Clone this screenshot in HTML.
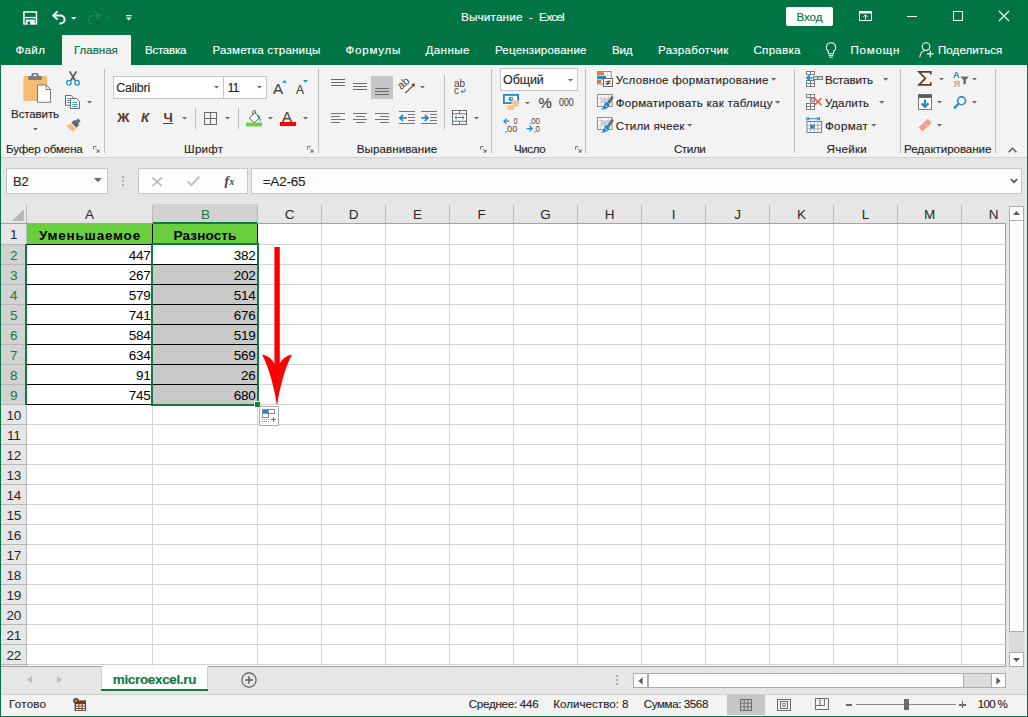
<!DOCTYPE html>
<html><head><meta charset="utf-8">
<style>
*{box-sizing:border-box;margin:0;padding:0}
html,body{width:1028px;height:717px;overflow:hidden;background:#e6e6e6;font-family:"Liberation Sans",sans-serif;font-size:12px;color:#262626}
.a{position:absolute}
.t{position:absolute;white-space:pre;line-height:1;-webkit-text-stroke:0.13px}
#title{left:0;top:0;width:1028px;height:65px;background:#007444}
#ribbon{left:1px;top:65px;width:1026px;height:93px;background:#f3f3f3;border-bottom:1px solid #d2d2d2}
#fbar{left:1px;top:158px;width:1026px;height:46px;background:#e6e6e6}
#grid{left:1px;top:204px;width:1005px;height:462px;background:#fff}
#bl{left:0;top:0;width:1px;height:717px;background:#007444}
#br{left:1027px;top:0;width:1px;height:717px;background:#007444}
#bb{left:0;top:716px;width:1028px;height:1px;background:#007444}
.w{color:#fff}
svg{position:absolute;overflow:visible}
</style></head><body>
<div class="a" id="title"></div>
<div class="a" id="ribbon"></div>
<div class="a" id="fbar"></div>
<div class="a" id="grid"></div>
<svg style="left:23px;top:10px" width="15" height="15" viewBox="0 0 15 15" ><rect x="0.95" y="1.95" width="12.5" height="11.9" fill="none" stroke="#fff" stroke-width="1.5"/><rect x="1" y="6.9" width="12.4" height="1.3" fill="#fff"/><rect x="2.8" y="9.6" width="9" height="4.6" fill="#fff"/><rect x="4.6" y="11.5" width="2.6" height="3.2" fill="#007444"/></svg>
<svg style="left:52px;top:10px" width="15" height="15" viewBox="0 0 15 15" ><path d="M1.4 5.5h7.2a4 4 0 0 1 0 8h-1.2" fill="none" stroke="#fff" stroke-width="1.9"/><path d="M5.6 1.4L1.2 5.5l4.4 4.1" fill="none" stroke="#fff" stroke-width="1.9"/></svg>
<svg style="left:71px;top:16.5px" width="6" height="3" viewBox="0 0 6 3" ><path d="M0 0h5.4l-2.7 2.8z" fill="#fff"/></svg>
<svg style="left:86px;top:10px" width="15" height="15" viewBox="0 0 15 15" ><path d="M13.8 5.8h-7.6a4 4 0 0 0 0 8h2.2" fill="none" stroke="#3f9470" stroke-width="1.3" stroke-dasharray="1.2 1.2"/><path d="M9.4 1.6l4.2 4.2-4.2 4.2" fill="none" stroke="#3f9470" stroke-width="1.3" stroke-dasharray="1.2 1.2"/></svg>
<svg style="left:106px;top:17px" width="4" height="2" viewBox="0 0 4 2" ><path d="M0 0h3l-1.5 1.6z" fill="#3f9470"/></svg>
<svg style="left:126px;top:15px" width="6" height="6" viewBox="0 0 6 6" ><rect x="0" y="0" width="5.6" height="1.2" fill="#fff"/><path d="M0 2.6h5.6l-2.8 2.9z" fill="#fff"/></svg>
<div class="t" style="left:460.9px;top:11.7357px;font-size:11.8px;color:#fff;letter-spacing:0.13px;">Вычитание</div>
<div class="t" style="left:528.7px;top:11.7357px;font-size:11.8px;color:#fff;letter-spacing:0.21px;">-</div>
<div class="t" style="left:539.1px;top:11.7357px;font-size:11.8px;color:#fff;letter-spacing:-0.83px;">Excel</div>
<div class="a" style="left:786px;top:7px;width:47px;height:19px;background:#fff;border-radius:2px;"></div>
<div class="t" style="left:796.5px;top:11.1334px;font-size:11.6px;color:#007444;letter-spacing:-0.10px;">Вход</div>
<svg style="left:859px;top:11px" width="13" height="10" viewBox="0 0 13 10" ><rect x="0.5" y="0.5" width="12" height="9" fill="none" stroke="#fff"/><rect x="0.5" y="0.5" width="12" height="2" fill="#fff"/><path d="M6.5 3.8v4.6M4.3 6l2.2-2.2L8.7 6" fill="none" stroke="#fff"/></svg>
<div class="a" style="left:907px;top:16px;width:10px;height:1px;background:#fff;"></div>
<div class="a" style="left:953px;top:11px;width:10px;height:10px;background:transparent;border:1px solid #fff;"></div>
<svg style="left:999px;top:11px" width="10" height="10" viewBox="0 0 10 10" ><path d="M0 0l10 10M10 0L0 10" stroke="#fff" stroke-width="1.1"/></svg>
<div class="a" style="left:62px;top:35px;width:69px;height:30px;background:#f3f3f3;"></div>
<div class="t" style="left:15.5px;top:43.9334px;font-size:11.6px;color:#fff;letter-spacing:0.30px;">Файл</div>
<div class="t" style="left:74px;top:43.9334px;font-size:11.6px;color:#006a3c;letter-spacing:-0.04px;">Главная</div>
<div class="t" style="left:145px;top:43.9334px;font-size:11.6px;color:#fff;letter-spacing:-0.28px;">Вставка</div>
<div class="t" style="left:212.5px;top:43.9334px;font-size:11.6px;color:#fff;letter-spacing:0.17px;">Разметка страницы</div>
<div class="t" style="left:345.5px;top:43.9334px;font-size:11.6px;color:#fff;letter-spacing:0.75px;">Формулы</div>
<div class="t" style="left:425.5px;top:43.9334px;font-size:11.6px;color:#fff;letter-spacing:0.41px;">Данные</div>
<div class="t" style="left:495px;top:43.9334px;font-size:11.6px;color:#fff;letter-spacing:0.15px;">Рецензирование</div>
<div class="t" style="left:612px;top:43.9334px;font-size:11.6px;color:#fff;letter-spacing:-0.28px;">Вид</div>
<div class="t" style="left:658px;top:43.9334px;font-size:11.6px;color:#fff;letter-spacing:0.28px;">Разработчик</div>
<div class="t" style="left:753.5px;top:43.9334px;font-size:11.6px;color:#fff;letter-spacing:0.24px;">Справка</div>
<div class="t" style="left:850.5px;top:43.9334px;font-size:11.6px;color:#fff;letter-spacing:0.75px;">Помощн</div>
<div class="t" style="left:938px;top:43.9334px;font-size:11.6px;color:#fff;letter-spacing:0.04px;">Поделиться</div>
<svg style="left:825px;top:42px" width="12" height="16" viewBox="0 0 12 16" ><path d="M6 0.8a4.6 4.6 0 0 1 2.6 8.4v2.6h-5.2v-2.6a4.6 4.6 0 0 1 2.6-8.4z" fill="none" stroke="#fff" stroke-width="1.1"/><path d="M3.6 13.4h4.8M4.2 15.2h3.6" stroke="#fff" stroke-width="1"/></svg>
<svg style="left:919px;top:42px" width="15" height="16" viewBox="0 0 15 16" ><circle cx="7" cy="4.6" r="3.8" fill="none" stroke="#fff" stroke-width="1.1"/><path d="M0.8 15.2c0.4-3.6 2.6-5.8 4.4-6.4" fill="none" stroke="#fff" stroke-width="1.1"/><path d="M11.3 8.6v6.6M8 11.9h6.6" stroke="#fff" stroke-width="1.2"/></svg>
<div class="a" style="left:104px;top:69px;width:1px;height:84px;background:#bdbdbd;"></div>
<div class="a" style="left:318px;top:69px;width:1px;height:84px;background:#bdbdbd;"></div>
<div class="a" style="left:491px;top:69px;width:1px;height:84px;background:#bdbdbd;"></div>
<div class="a" style="left:585px;top:69px;width:1px;height:84px;background:#bdbdbd;"></div>
<div class="a" style="left:794px;top:69px;width:1px;height:84px;background:#bdbdbd;"></div>
<div class="a" style="left:900px;top:69px;width:1px;height:84px;background:#bdbdbd;"></div>
<div class="a" style="left:995px;top:69px;width:1px;height:84px;background:#bdbdbd;"></div>
<svg style="left:23px;top:73px" width="28" height="30" viewBox="0 0 28 30" ><rect x="0.3" y="3" width="24" height="25" rx="1.5" fill="#f5bd73"/><path d="M5.2 7v-4h3.2v-1.4q0-1.6 1.6-1.6h4q1.6 0 1.6 1.6v1.400h3.200v4z" fill="#7b7b7b"/><rect x="10.400" y="1.500" width="3.200" height="1.700" fill="#f3f3f3"/><path d="M14.5 12h8.6l4.4 4.4v12.9h-13z" fill="#fff" stroke="#7b7b7b" stroke-width="1"/><path d="M23 12v4.5h4.5" fill="none" stroke="#7b7b7b" stroke-width="1"/></svg>
<div class="t" style="left:11.1px;top:108.133px;font-size:11.6px;color:#262626;letter-spacing:-0.16px;">Вставить</div>
<svg style="left:33px;top:128.1px" width="5" height="2.6" viewBox="0 0 5 2.6" ><path d="M0 0h5 l-2.5 2.6 z" fill="#6a6a6a"/></svg>
<svg style="left:66px;top:71px" width="14" height="15" viewBox="0 0 14 15" ><path d="M3.6 0.4l5.6 9.2M10.4 0.4L4.8 9.6" stroke="#5a5a5a" stroke-width="1.8" fill="none"/><circle cx="2.9" cy="11.7" r="2.3" fill="none" stroke="#1e8bcd" stroke-width="1.2"/><circle cx="11.1" cy="11.7" r="2.3" fill="none" stroke="#1e8bcd" stroke-width="1.2"/></svg>
<svg style="left:65px;top:94.5px" width="15" height="14" viewBox="0 0 15 14" ><path d="M0.5 0.5h5.6l2.2 2.2v7.6h-7.8z" fill="#fff" stroke="#6a6a6a"/><path d="M2.2 3.4h3M2.2 5.4h3M2.2 7.4h3" stroke="#1e8bcd" stroke-width="0.9"/><path d="M5.5 3.5h6l3 3v7h-9z" fill="#fff" stroke="#6a6a6a"/><path d="M7.4 7.4h4.6M7.4 9.4h5.4M7.4 11.4h5.4" stroke="#1e8bcd" stroke-width="0.9"/></svg>
<svg style="left:87px;top:101.1px" width="5" height="2.6" viewBox="0 0 5 2.6" ><path d="M0 0h5 l-2.5 2.6 z" fill="#6a6a6a"/></svg>
<svg style="left:66px;top:117.5px" width="15" height="14" viewBox="0 0 15 14" ><path d="M9.6 2.8l2.6-2.4 2.4 2.5-2.5 2.5z" fill="#6a6a6a"/><path d="M5.2 4.4l3.6-2.6 4.4 4.6-2.8 3.6z" fill="#6a6a6a"/><path d="M4.4 5.4l5.6 5.6-3.4 2.6-6.4-5.4z" fill="#f5bd73"/></svg>
<div class="t" style="left:6px;top:142.933px;font-size:11.6px;color:#262626;letter-spacing:-0.18px;">Буфер обмена</div>
<svg style="left:93px;top:146px" width="7" height="7" viewBox="0 0 7 7" ><path d="M0.5 3.5v-3h3" fill="none" stroke="#777" stroke-width="1"/><path d="M2.6 2.6l3.4 3.4" stroke="#777" stroke-width="1"/><path d="M6.5 3v3.5h-3.5z" fill="#777"/></svg>
<div class="a" style="left:113px;top:76px;width:111px;height:23px;background:#fff;border:1px solid #c6c6c6;"></div>
<div class="a" style="left:224px;top:76px;width:43px;height:23px;background:#fff;border:1px solid #c6c6c6;border-left:none;"></div>
<div class="t" style="left:116.3px;top:82.3937px;font-size:12.5px;color:#262626;letter-spacing:-0.26px;">Calibri</div>
<svg style="left:214px;top:86.1px" width="5" height="2.6" viewBox="0 0 5 2.6" ><path d="M0 0h5 l-2.5 2.6 z" fill="#6a6a6a"/></svg>
<div class="t" style="left:227.5px;top:82.3937px;font-size:12.5px;color:#262626;letter-spacing:-1.00px;">11</div>
<svg style="left:256.6px;top:86.1px" width="5" height="2.6" viewBox="0 0 5 2.6" ><path d="M0 0h5 l-2.5 2.6 z" fill="#6a6a6a"/></svg>
<div class="t" style="left:272.9px;top:81.2725px;font-size:15px;color:#444;letter-spacing:1.18px;">A</div>
<svg style="left:281.6px;top:79.6px" width="5" height="3" viewBox="0 0 5 3" ><path d="M0 2.8h5L2.5 0z" fill="#1e8bcd"/></svg>
<div class="t" style="left:295.9px;top:83.738px;font-size:12px;color:#444;letter-spacing:0.94px;">A</div>
<svg style="left:303px;top:79.6px" width="5" height="3" viewBox="0 0 5 3" ><path d="M0 0h5L2.5 2.8z" fill="#1e8bcd"/></svg>
<div class="t" style="left:117.3px;top:110.905px;font-size:13.5px;color:#5c3d2e;letter-spacing:1.48px;font-weight:bold;">Ж</div>
<div class="t" style="left:141.1px;top:111.003px;font-size:13.3px;color:#5c3d2e;letter-spacing:1.18px;font-weight:bold;font-style:italic;">К</div>
<div class="t" style="left:163.5px;top:111.003px;font-size:13.3px;color:#5c3d2e;letter-spacing:1.12px;font-weight:bold;">Ч</div>
<div class="a" style="left:162.6px;top:123px;width:10.6px;height:1px;background:#5c3d2e;"></div>
<svg style="left:182px;top:116.9px" width="5" height="2.6" viewBox="0 0 5 2.6" ><path d="M0 0h5 l-2.5 2.6 z" fill="#6a6a6a"/></svg>
<div class="a" style="left:195px;top:108px;width:1px;height:21px;background:#bdbdbd;"></div>
<svg style="left:204px;top:111.5px" width="13" height="13" viewBox="0 0 13 13" ><rect x="0.5" y="0.5" width="12" height="12" fill="none" stroke="#6a6a6a"/><path d="M6.5 0.5v12M0.5 6.5h12" stroke="#6a6a6a"/></svg>
<svg style="left:225px;top:116.9px" width="5" height="2.6" viewBox="0 0 5 2.6" ><path d="M0 0h5 l-2.5 2.6 z" fill="#6a6a6a"/></svg>
<div class="a" style="left:238px;top:108px;width:1px;height:21px;background:#bdbdbd;"></div>
<svg style="left:246px;top:109.5px" width="16" height="17" viewBox="0 0 16 17" ><path d="M3.4 8.2l5.4-5.6 5 4.8-5.6 5.4z" fill="#fff" stroke="#5a5a5a" stroke-width="1"/><path d="M6.8 5v-3.2a1.4 1.4 0 0 1 2.8 0v2" fill="none" stroke="#5a5a5a" stroke-width="1"/><path d="M13 7.2c1.4 1 2.2 2.4 1.6 4.2-0.9-0.9-1.7-2.2-1.6-4.2z" fill="#1e8bcd"/><path d="M11.5 6l2 1.4" stroke="#1e8bcd" stroke-width="1.6"/><rect x="0" y="12.6" width="16" height="3.8" fill="#6acf3f"/></svg>
<svg style="left:268px;top:116.9px" width="5" height="2.6" viewBox="0 0 5 2.6" ><path d="M0 0h5 l-2.5 2.6 z" fill="#6a6a6a"/></svg>
<div class="t" style="left:281.9px;top:108.772px;font-size:15px;color:#5c3d2e;letter-spacing:1.50px;">A</div>
<div class="a" style="left:280px;top:122.2px;width:16px;height:3.8px;background:#f00;"></div>
<svg style="left:302.5px;top:116.9px" width="5" height="2.6" viewBox="0 0 5 2.6" ><path d="M0 0h5 l-2.5 2.6 z" fill="#6a6a6a"/></svg>
<div class="t" style="left:184.1px;top:142.933px;font-size:11.6px;color:#262626;letter-spacing:0.19px;">Шрифт</div>
<svg style="left:307px;top:146px" width="7" height="7" viewBox="0 0 7 7" ><path d="M0.5 3.5v-3h3" fill="none" stroke="#777" stroke-width="1"/><path d="M2.6 2.6l3.4 3.4" stroke="#777" stroke-width="1"/><path d="M6.5 3v3.5h-3.5z" fill="#777"/></svg>
<div class="a" style="left:331px;top:79px;width:14px;height:1px;background:#6a6a6a;"></div>
<div class="a" style="left:331px;top:82px;width:14px;height:1px;background:#6a6a6a;"></div>
<div class="a" style="left:331px;top:85px;width:14px;height:1px;background:#6a6a6a;"></div>
<div class="a" style="left:353px;top:83px;width:14px;height:1px;background:#6a6a6a;"></div>
<div class="a" style="left:353px;top:86px;width:14px;height:1px;background:#6a6a6a;"></div>
<div class="a" style="left:353px;top:89px;width:14px;height:1px;background:#6a6a6a;"></div>
<div class="a" style="left:371px;top:76px;width:22px;height:23px;background:#c6c6c6;"></div>
<div class="a" style="left:375px;top:88px;width:14px;height:1px;background:#6a6a6a;"></div>
<div class="a" style="left:375px;top:91px;width:14px;height:1px;background:#6a6a6a;"></div>
<div class="a" style="left:375px;top:94px;width:14px;height:1px;background:#6a6a6a;"></div>
<svg style="left:398px;top:78px" width="18" height="16" viewBox="0 0 18 16" ><text x="0" y="0" font-family="Liberation Sans" font-size="11" fill="#5c3d2e" transform="translate(3.2 12) rotate(-42)">ab</text><path d="M7.4 15.2L16 6.6" stroke="#5c3d2e" stroke-width="1.1"/><path d="M13.2 6l3.6-0.4-0.4 3.6z" fill="#5c3d2e"/></svg>
<svg style="left:419.5px;top:86.1px" width="5" height="2.6" viewBox="0 0 5 2.6" ><path d="M0 0h5 l-2.5 2.6 z" fill="#6a6a6a"/></svg>
<div class="a" style="left:444px;top:75px;width:1px;height:54px;background:#bdbdbd;"></div>
<svg style="left:454px;top:78.5px" width="13" height="16" viewBox="0 0 13 16" ><text x="0" y="7.8" font-family="Liberation Sans" font-size="10" fill="#5c3d2e">ab</text><text x="0" y="15" font-family="Liberation Sans" font-size="10" fill="#5c3d2e">c</text><path d="M11 9.5v3.2h-4" fill="none" stroke="#1e8bcd" stroke-width="1"/><path d="M8.6 10.8l-2 1.9 2 1.9z" fill="#1e8bcd"/></svg>
<div class="a" style="left:331px;top:113px;width:14px;height:1px;background:#777;"></div>
<div class="a" style="left:331px;top:116px;width:9px;height:1px;background:#777;"></div>
<div class="a" style="left:331px;top:119px;width:14px;height:1px;background:#777;"></div>
<div class="a" style="left:331px;top:122px;width:9px;height:1px;background:#777;"></div>
<div class="a" style="left:353px;top:113px;width:14px;height:1px;background:#777;"></div>
<div class="a" style="left:355.5px;top:116px;width:9px;height:1px;background:#777;"></div>
<div class="a" style="left:353px;top:119px;width:14px;height:1px;background:#777;"></div>
<div class="a" style="left:355.5px;top:122px;width:9px;height:1px;background:#777;"></div>
<div class="a" style="left:375px;top:113px;width:14px;height:1px;background:#777;"></div>
<div class="a" style="left:380px;top:116px;width:9px;height:1px;background:#777;"></div>
<div class="a" style="left:375px;top:119px;width:14px;height:1px;background:#777;"></div>
<div class="a" style="left:380px;top:122px;width:9px;height:1px;background:#777;"></div>
<div class="a" style="left:408px;top:114px;width:7px;height:1px;background:#777;"></div>
<div class="a" style="left:408px;top:117px;width:7px;height:1px;background:#777;"></div>
<div class="a" style="left:408px;top:120px;width:7px;height:1px;background:#777;"></div>
<div class="a" style="left:399px;top:111px;width:16px;height:1px;background:#777;"></div>
<div class="a" style="left:399px;top:123px;width:16px;height:1px;background:#777;"></div>
<svg style="left:399px;top:113.6px" width="8" height="8" viewBox="0 0 8 8" ><path d="M7.6 3.9h-6M4 0.8l-3.2 3.1 3.2 3.1" fill="none" stroke="#1e8bcd" stroke-width="1.7"/></svg>
<div class="a" style="left:430px;top:114px;width:7px;height:1px;background:#777;"></div>
<div class="a" style="left:430px;top:117px;width:7px;height:1px;background:#777;"></div>
<div class="a" style="left:430px;top:120px;width:7px;height:1px;background:#777;"></div>
<div class="a" style="left:421px;top:111px;width:16px;height:1px;background:#777;"></div>
<div class="a" style="left:421px;top:123px;width:16px;height:1px;background:#777;"></div>
<svg style="left:421px;top:113.6px" width="8" height="8" viewBox="0 0 8 8" ><path d="M0.2 3.9h6M3.8 0.8l3.2 3.1-3.2 3.1" fill="none" stroke="#1e8bcd" stroke-width="1.7"/></svg>
<svg style="left:452px;top:110px" width="15" height="15" viewBox="0 0 15 15" ><rect x="0.5" y="0.5" width="14" height="14" fill="#fff" stroke="#6a6a6a"/><path d="M0.5 3.8h14M0.5 11.2h14M7.5 0.5v3.3M7.5 11.2v3.3" stroke="#6a6a6a"/><path d="M3 7.5h9M4.8 5.7l-2 1.8 2 1.8M10.2 5.7l2 1.8-2 1.8" fill="none" stroke="#1e8bcd" stroke-width="1"/></svg>
<svg style="left:474px;top:116.9px" width="5" height="2.6" viewBox="0 0 5 2.6" ><path d="M0 0h5 l-2.5 2.6 z" fill="#6a6a6a"/></svg>
<div class="t" style="left:356.7px;top:142.933px;font-size:11.6px;color:#262626;letter-spacing:0.07px;">Выравнивание</div>
<svg style="left:480px;top:146px" width="7" height="7" viewBox="0 0 7 7" ><path d="M0.5 3.5v-3h3" fill="none" stroke="#777" stroke-width="1"/><path d="M2.6 2.6l3.4 3.4" stroke="#777" stroke-width="1"/><path d="M6.5 3v3.5h-3.5z" fill="#777"/></svg>
<div class="a" style="left:500px;top:68px;width:78px;height:23px;background:#fff;border:1px solid #c6c6c6;"></div>
<div class="t" style="left:503.1px;top:74.0938px;font-size:12.5px;color:#262626;letter-spacing:-0.11px;">Общий</div>
<svg style="left:568px;top:78.7px" width="5" height="2.6" viewBox="0 0 5 2.6" ><path d="M0 0h5 l-2.5 2.6 z" fill="#6a6a6a"/></svg>
<svg style="left:503px;top:94px" width="17" height="17" viewBox="0 0 17 17" ><rect x="0.9" y="0.9" width="14.2" height="8.2" fill="#fff" stroke="#1e8bcd" stroke-width="1.8"/><circle cx="8" cy="5" r="2.3" fill="#1e8bcd"/><circle cx="8.6" cy="4.6" r="0.9" fill="#fff"/><g fill="#f5bd73" stroke="#fbe6c8" stroke-width="0.5"><ellipse cx="12.3" cy="11.6" rx="3.7" ry="1.4"/><ellipse cx="12.3" cy="9.6" rx="3.7" ry="1.4"/><ellipse cx="12.3" cy="7.6" rx="3.7" ry="1.4"/><ellipse cx="7.6" cy="14.6" rx="3.7" ry="1.4"/><ellipse cx="7.6" cy="12.6" rx="3.7" ry="1.4"/></g></svg>
<svg style="left:525px;top:101.7px" width="5" height="2.6" viewBox="0 0 5 2.6" ><path d="M0 0h5 l-2.5 2.6 z" fill="#6a6a6a"/></svg>
<div class="t" style="left:538.5px;top:95.0725px;font-size:15px;color:#4a3a32;letter-spacing:1.46px;">%</div>
<div class="t" style="left:559px;top:96.6px;font-size:11px;color:#5c3d2e;transform:scaleX(0.8);transform-origin:0 0;">000</div>
<svg style="left:503px;top:117.5px" width="16" height="15" viewBox="0 0 16 15" ><path d="M6.3 3.2h-5.2M3.6 0.6l-2.6 2.6 2.6 2.6" fill="none" stroke="#1e8bcd" stroke-width="1.3"/><g font-family="Liberation Sans" font-size="8.6" fill="#5c3d2e"><text x="10.4" y="6.4" textLength="4" lengthAdjust="spacingAndGlyphs">0</text><text x="1.6" y="13.6" textLength="12.6" lengthAdjust="spacingAndGlyphs">,00</text></g></svg>
<svg style="left:526px;top:117.5px" width="15" height="15" viewBox="0 0 15 15" ><g font-family="Liberation Sans" font-size="8.6" fill="#5c3d2e"><text x="3" y="6.4" textLength="11" lengthAdjust="spacingAndGlyphs">,00</text><text x="7.4" y="13.6" textLength="6.6" lengthAdjust="spacingAndGlyphs">,0</text></g><path d="M0.6 10.6h5.4M3.6 8l2.6 2.6-2.6 2.6" fill="none" stroke="#1e8bcd" stroke-width="1.3"/></svg>
<div class="t" style="left:514px;top:142.933px;font-size:11.6px;color:#262626;letter-spacing:-0.43px;">Число</div>
<svg style="left:574.5px;top:146px" width="7" height="7" viewBox="0 0 7 7" ><path d="M0.5 3.5v-3h3" fill="none" stroke="#777" stroke-width="1"/><path d="M2.6 2.6l3.4 3.4" stroke="#777" stroke-width="1"/><path d="M6.5 3v3.5h-3.5z" fill="#777"/></svg>
<svg style="left:597px;top:71px" width="17" height="17" viewBox="0 0 17 17" ><rect x="0.5" y="0.5" width="13.500" height="12.500" fill="#fff" stroke="#8a8a8a"/><path d="M7.200 0.500v12.500M10.600 0.500v12.500M0.500 4.600h13.500M0.500 8.600h13.500" stroke="#d0d0d0" stroke-width="0.800"/><rect x="1" y="1.200" width="5.800" height="3" fill="#e8733a"/><rect x="1" y="5" width="8" height="3.200" fill="#1e8bcd"/><rect x="1" y="9" width="3.200" height="3.400" fill="#e8733a"/><rect x="6.500" y="7.500" width="9" height="8" fill="#fff" stroke="#6a6a6a"/><path d="M8.600 10.600h4.800M8.600 12.600h4.800M12.400 9.200l-2.600 5" stroke="#262626" stroke-width="0.900"/></svg>
<div class="t" style="left:615.7px;top:73.6334px;font-size:11.6px;color:#262626;letter-spacing:0.24px;">Условное форматирование</div>
<svg style="left:771px;top:78.096px" width="5.4" height="2.808" viewBox="0 0 5.4 2.808" ><path d="M0 0h5.4 l-2.7 2.808 z" fill="#6a6a6a"/></svg>
<svg style="left:597px;top:94px" width="17" height="17" viewBox="0 0 17 17" ><rect x="0.5" y="0.5" width="14.500" height="12" fill="#fff" stroke="#8a8a8a"/><rect x="4" y="4.500" width="7.400" height="4.400" fill="#d4d4d4"/><path d="M0.500 4.300h14.500M0.500 8.700h14.500M4 0.500v12M7.800 0.500v12M11.600 0.500v12" stroke="#c4c4c4" stroke-width="0.800"/><path d="M15.600 2.400L11.400 9.200" stroke="#6a6a6a" stroke-width="2.800"/><path d="M10.200 8.400l2.600 2c-0.800 3-3.800 5.200-8.800 5.200 2.200-1.400 2.800-3.400 3.200-5 0.600-1.600 1.800-2.400 3-2.200z" fill="#1e8bcd"/><path d="M8.400 11.600l1.600 1.400" stroke="#fff" stroke-width="0.900"/></svg>
<div class="t" style="left:615.7px;top:97.0334px;font-size:11.6px;color:#262626;letter-spacing:0.25px;">Форматировать как таблицу</div>
<svg style="left:775px;top:101.096px" width="5.4" height="2.808" viewBox="0 0 5.4 2.808" ><path d="M0 0h5.4 l-2.7 2.808 z" fill="#6a6a6a"/></svg>
<svg style="left:597px;top:117px" width="17" height="17" viewBox="0 0 17 17" ><rect x="0.5" y="0.5" width="14.500" height="12" fill="#fff" stroke="#8a8a8a"/><rect x="4" y="3.800" width="7.400" height="4.800" fill="#d4d4d4"/><path d="M6.200 5l1.600 1.800M9.200 5l-1 1.400" stroke="#49d2e4" stroke-width="0.900"/><path d="M0.500 3.600h14.500M0.500 8.800h14.500M4 0.500v12M11.600 0.500v12" stroke="#c4c4c4" stroke-width="0.800"/><path d="M15.600 2.400L11.400 9.200" stroke="#6a6a6a" stroke-width="2.800"/><path d="M10.200 8.400l2.600 2c-0.800 3-3.800 5.200-8.800 5.200 2.200-1.400 2.800-3.400 3.200-5 0.600-1.600 1.800-2.400 3-2.200z" fill="#1e8bcd"/><path d="M8.400 11.600l1.600 1.400" stroke="#fff" stroke-width="0.900"/></svg>
<div class="t" style="left:615.7px;top:119.833px;font-size:11.6px;color:#262626;letter-spacing:0.18px;">Стили ячеек</div>
<svg style="left:686.7px;top:124.222px" width="5.3" height="2.756" viewBox="0 0 5.3 2.756" ><path d="M0 0h5.3 l-2.65 2.756 z" fill="#6a6a6a"/></svg>
<div class="t" style="left:673.9px;top:142.933px;font-size:11.6px;color:#262626;letter-spacing:-0.39px;">Стили</div>
<svg style="left:805.5px;top:71px" width="17" height="17" viewBox="0 0 17 17" ><g fill="#fff" stroke="#7b7b7b"><rect x="0.5" y="0.5" width="4" height="3"/><rect x="4.5" y="0.5" width="4" height="3"/><rect x="0.5" y="9.5" width="4" height="3"/><rect x="4.5" y="9.5" width="4" height="3"/><rect x="0.5" y="12.5" width="4" height="3"/><rect x="4.5" y="12.5" width="4" height="3"/><rect x="7.5" y="5.5" width="4.500" height="3" fill="#d9d9d9"/><rect x="12" y="5.5" width="4.500" height="3" fill="#d9d9d9"/></g><path d="M6.600 7h-5.400M3.800 4.400l-2.800 2.600 2.800 2.600" fill="none" stroke="#1e8bcd" stroke-width="1.600"/></svg>
<div class="t" style="left:824.9px;top:73.6334px;font-size:11.6px;color:#262626;letter-spacing:-0.15px;">Вставить</div>
<svg style="left:882.6px;top:78.196px" width="5.4" height="2.808" viewBox="0 0 5.4 2.808" ><path d="M0 0h5.4 l-2.7 2.808 z" fill="#6a6a6a"/></svg>
<svg style="left:805.5px;top:94px" width="17" height="17" viewBox="0 0 17 17" ><g fill="#fff" stroke="#7b7b7b"><rect x="0.5" y="0.5" width="4" height="3"/><rect x="4.5" y="0.5" width="4" height="3"/><rect x="4.5" y="4.800" width="4" height="3" fill="#d9d9d9"/><rect x="0.5" y="9.5" width="4" height="3"/><rect x="4.5" y="9.5" width="4" height="3"/><rect x="0.5" y="12.5" width="4" height="3"/><rect x="4.5" y="12.5" width="4" height="3"/></g><path d="M8.500 4.200l6.800 6.800M15.300 4.200l-6.800 6.800" stroke="#ee5a3a" stroke-width="1.600"/></svg>
<div class="t" style="left:824.9px;top:96.7334px;font-size:11.6px;color:#262626;letter-spacing:-0.01px;">Удалить</div>
<svg style="left:878.7px;top:101.17px" width="5.5" height="2.86" viewBox="0 0 5.5 2.86" ><path d="M0 0h5.5 l-2.75 2.86 z" fill="#6a6a6a"/></svg>
<svg style="left:805.5px;top:117px" width="17" height="17" viewBox="0 0 17 17" ><path d="M1 1.700h12.400M0.900 0v3.400M13.500 0v3.400M3.200 0.300l-1.800 1.400 1.800 1.400M11.200 0.300l1.800 1.400-1.800 1.400" fill="none" stroke="#1e8bcd" stroke-width="1"/><rect x="1" y="4.500" width="14.500" height="11" fill="#fff" stroke="#7b7b7b"/><path d="M1 8.200h14.500M1 11.800h14.500M4.600 4.500v11M8.300 4.500v11M11.900 4.500v11" stroke="#9a9a9a" stroke-width="0.800"/><rect x="4.300" y="7.600" width="4.300" height="4" fill="#1e8bcd"/></svg>
<div class="t" style="left:824.9px;top:119.633px;font-size:11.6px;color:#262626;letter-spacing:0.37px;">Формат</div>
<svg style="left:871px;top:124.196px" width="5.4" height="2.808" viewBox="0 0 5.4 2.808" ><path d="M0 0h5.4 l-2.7 2.808 z" fill="#6a6a6a"/></svg>
<div class="t" style="left:826.5px;top:142.933px;font-size:11.6px;color:#262626;letter-spacing:0.29px;">Ячейки</div>
<svg style="left:917px;top:71px" width="16" height="15" viewBox="0 0 16 15" ><path d="M13.800 3.600v-2.700h-11.800l6.400 6.500-6.400 6.500h11.800v-2.700" fill="none" stroke="#5c3d2e" stroke-width="1.7" stroke-linejoin="miter"/></svg>
<svg style="left:938.6px;top:78.3px" width="5" height="2.6" viewBox="0 0 5 2.6" ><path d="M0 0h5 l-2.5 2.6 z" fill="#6a6a6a"/></svg>
<svg style="left:952.5px;top:70.5px" width="16" height="17" viewBox="0 0 16 17" ><text x="0" y="7.4" font-family="Liberation Sans" font-size="9" font-weight="bold" fill="#1e8bcd">А</text><text x="0.4" y="16.2" font-family="Liberation Sans" font-size="9" fill="#8a8a8a">Я</text><path d="M7.4 5.6h8.4l-3 3.4v4.2h-2.4v-4.2z" fill="#6a6a6a"/></svg>
<svg style="left:972.2px;top:78.3px" width="5" height="2.6" viewBox="0 0 5 2.6" ><path d="M0 0h5 l-2.5 2.6 z" fill="#6a6a6a"/></svg>
<svg style="left:918px;top:94.4px" width="14" height="16" viewBox="0 0 14 16" ><rect x="0.5" y="0.5" width="13" height="15" fill="#fff" stroke="#7b7b7b"/><rect x="0.5" y="0.5" width="13" height="3.4" fill="#5a5a5a"/><path d="M7 5.400v7M3.600 9.400l3.400 3.400 3.400-3.400" fill="none" stroke="#1e8bcd" stroke-width="2.200"/></svg>
<svg style="left:937px;top:101.3px" width="5" height="2.6" viewBox="0 0 5 2.6" ><path d="M0 0h5 l-2.5 2.6 z" fill="#6a6a6a"/></svg>
<svg style="left:952.5px;top:96px" width="14" height="13" viewBox="0 0 14 13" ><circle cx="8.6" cy="4.8" r="3.9" fill="#fff" stroke="#1e8bcd" stroke-width="1.6"/><path d="M5.6 7.8l-4.6 4.6" stroke="#1e8bcd" stroke-width="2.2"/></svg>
<svg style="left:972.2px;top:101.3px" width="5" height="2.6" viewBox="0 0 5 2.6" ><path d="M0 0h5 l-2.5 2.6 z" fill="#6a6a6a"/></svg>
<svg style="left:918px;top:117.5px" width="14" height="14" viewBox="0 0 14 14" ><path d="M0.6 9.6l9.2-9 3.8 3.8-9.2 9z" fill="#f59a95"/><path d="M5.6 4.8l3.8 3.8" stroke="#fbd0cc" stroke-width="0.8"/><path d="M7.2 3.2l3.8 3.8" stroke="#e8635c" stroke-width="0.8" stroke-dasharray="1 1"/></svg>
<svg style="left:937px;top:124.3px" width="5" height="2.6" viewBox="0 0 5 2.6" ><path d="M0 0h5 l-2.5 2.6 z" fill="#6a6a6a"/></svg>
<div class="t" style="left:904.1px;top:142.933px;font-size:11.6px;color:#262626;letter-spacing:-0.08px;">Редактирование</div>
<svg style="left:1008px;top:146.5px" width="9" height="6" viewBox="0 0 9 6" ><path d="M0.6 5.2l3.9-4 3.9 4" fill="none" stroke="#5a5a5a" stroke-width="1.5"/></svg>
<div class="a" style="left:6px;top:168px;width:102px;height:26px;background:#fcfcfc;border:1px solid #c6c6c6;"></div>
<div class="a" style="left:138px;top:168px;width:110px;height:26px;background:#fcfcfc;border:1px solid #c6c6c6;"></div>
<div class="a" style="left:251px;top:168px;width:771px;height:26px;background:#fcfcfc;border:1px solid #c6c6c6;"></div>
<div class="t" style="left:13px;top:174.95px;font-size:13px;color:#262626;letter-spacing:-0.17px;">B2</div>
<svg style="left:93.7px;top:178px" width="8" height="4.4" viewBox="0 0 8 4.4" ><path d="M0 0h7.8l-3.9 4.2z" fill="#6a6a6a"/></svg>
<div class="a" style="left:122px;top:176px;width:2px;height:2px;background:#a9adab;"></div>
<div class="a" style="left:122px;top:180px;width:2px;height:2px;background:#a9adab;"></div>
<div class="a" style="left:122px;top:184px;width:2px;height:2px;background:#a9adab;"></div>
<svg style="left:151.5px;top:176.6px" width="10.5" height="9.5" viewBox="0 0 10.5 9.5" ><path d="M0.5 0.5l9.4 8.6M9.9 0.5L0.5 9.1" stroke="#bdbdbd" stroke-width="1.700" fill="none"/></svg>
<svg style="left:186.8px;top:176.4px" width="13" height="10" viewBox="0 0 13 10" ><path d="M0.6 5.6l3.8 3.6L12.4 0.6" stroke="#c2c2c2" stroke-width="2.100" fill="none"/></svg>
<div class="t" style="left:224.4px;top:173.6px;font-size:13.5px;color:#4a4a4a;font-family:'Liberation Serif',serif;font-weight:bold;"><i>f</i></div>
<div class="t" style="left:229.4px;top:178.4px;font-size:9.5px;color:#4a4a4a;font-family:'Liberation Serif',serif;font-weight:bold;"><i>x</i></div>
<div class="t" style="left:262.7px;top:175.005px;font-size:13.5px;color:#262626;letter-spacing:-0.21px;">=A2-65</div>
<svg style="left:1009.6px;top:177.6px" width="8" height="6" viewBox="0 0 8 6" ><path d="M0.8 1l3.2 3.2L7.2 1" fill="none" stroke="#555" stroke-width="1.7"/></svg>
<div class="a" style="left:1px;top:204px;width:1005px;height:20px;background:#e6e6e6;"></div>
<div class="a" style="left:1px;top:224px;width:26px;height:442px;background:#e6e6e6;"></div>
<div class="a" style="left:1px;top:245px;width:25px;height:160px;background:#d2d2d2;"></div>
<div class="a" style="left:153px;top:204px;width:104px;height:18px;background:#d2d2d2;"></div>
<div class="a" style="left:152px;top:224px;width:1px;height:442px;background:#d4d4d4;"></div>
<div class="a" style="left:257px;top:224px;width:1px;height:442px;background:#d4d4d4;"></div>
<div class="a" style="left:321px;top:224px;width:1px;height:442px;background:#d4d4d4;"></div>
<div class="a" style="left:385px;top:224px;width:1px;height:442px;background:#d4d4d4;"></div>
<div class="a" style="left:449px;top:224px;width:1px;height:442px;background:#d4d4d4;"></div>
<div class="a" style="left:513px;top:224px;width:1px;height:442px;background:#d4d4d4;"></div>
<div class="a" style="left:577px;top:224px;width:1px;height:442px;background:#d4d4d4;"></div>
<div class="a" style="left:641px;top:224px;width:1px;height:442px;background:#d4d4d4;"></div>
<div class="a" style="left:705px;top:224px;width:1px;height:442px;background:#d4d4d4;"></div>
<div class="a" style="left:769px;top:224px;width:1px;height:442px;background:#d4d4d4;"></div>
<div class="a" style="left:833px;top:224px;width:1px;height:442px;background:#d4d4d4;"></div>
<div class="a" style="left:897px;top:224px;width:1px;height:442px;background:#d4d4d4;"></div>
<div class="a" style="left:961px;top:224px;width:1px;height:442px;background:#d4d4d4;"></div>
<div class="a" style="left:26px;top:205px;width:1px;height:19px;background:#b8b8b8;"></div>
<div class="a" style="left:152px;top:205px;width:1px;height:19px;background:#b8b8b8;"></div>
<div class="a" style="left:257px;top:205px;width:1px;height:19px;background:#b8b8b8;"></div>
<div class="a" style="left:321px;top:205px;width:1px;height:19px;background:#b8b8b8;"></div>
<div class="a" style="left:385px;top:205px;width:1px;height:19px;background:#b8b8b8;"></div>
<div class="a" style="left:449px;top:205px;width:1px;height:19px;background:#b8b8b8;"></div>
<div class="a" style="left:513px;top:205px;width:1px;height:19px;background:#b8b8b8;"></div>
<div class="a" style="left:577px;top:205px;width:1px;height:19px;background:#b8b8b8;"></div>
<div class="a" style="left:641px;top:205px;width:1px;height:19px;background:#b8b8b8;"></div>
<div class="a" style="left:705px;top:205px;width:1px;height:19px;background:#b8b8b8;"></div>
<div class="a" style="left:769px;top:205px;width:1px;height:19px;background:#b8b8b8;"></div>
<div class="a" style="left:833px;top:205px;width:1px;height:19px;background:#b8b8b8;"></div>
<div class="a" style="left:897px;top:205px;width:1px;height:19px;background:#b8b8b8;"></div>
<div class="a" style="left:961px;top:205px;width:1px;height:19px;background:#b8b8b8;"></div>
<div class="a" style="left:26px;top:224px;width:1px;height:442px;background:#b8b8b8;"></div>
<div class="a" style="left:1px;top:223px;width:1005px;height:1px;background:#a2a2a2;"></div>
<div class="a" style="left:27px;top:244px;width:979px;height:1px;background:#d4d4d4;"></div>
<div class="a" style="left:1px;top:244px;width:25px;height:1px;background:#b8b8b8;"></div>
<div class="a" style="left:27px;top:264px;width:979px;height:1px;background:#d4d4d4;"></div>
<div class="a" style="left:1px;top:264px;width:25px;height:1px;background:#b8b8b8;"></div>
<div class="a" style="left:27px;top:284px;width:979px;height:1px;background:#d4d4d4;"></div>
<div class="a" style="left:1px;top:284px;width:25px;height:1px;background:#b8b8b8;"></div>
<div class="a" style="left:27px;top:304px;width:979px;height:1px;background:#d4d4d4;"></div>
<div class="a" style="left:1px;top:304px;width:25px;height:1px;background:#b8b8b8;"></div>
<div class="a" style="left:27px;top:324px;width:979px;height:1px;background:#d4d4d4;"></div>
<div class="a" style="left:1px;top:324px;width:25px;height:1px;background:#b8b8b8;"></div>
<div class="a" style="left:27px;top:344px;width:979px;height:1px;background:#d4d4d4;"></div>
<div class="a" style="left:1px;top:344px;width:25px;height:1px;background:#b8b8b8;"></div>
<div class="a" style="left:27px;top:364px;width:979px;height:1px;background:#d4d4d4;"></div>
<div class="a" style="left:1px;top:364px;width:25px;height:1px;background:#b8b8b8;"></div>
<div class="a" style="left:27px;top:384px;width:979px;height:1px;background:#d4d4d4;"></div>
<div class="a" style="left:1px;top:384px;width:25px;height:1px;background:#b8b8b8;"></div>
<div class="a" style="left:27px;top:404px;width:979px;height:1px;background:#d4d4d4;"></div>
<div class="a" style="left:1px;top:404px;width:25px;height:1px;background:#b8b8b8;"></div>
<div class="a" style="left:27px;top:424px;width:979px;height:1px;background:#d4d4d4;"></div>
<div class="a" style="left:1px;top:424px;width:25px;height:1px;background:#b8b8b8;"></div>
<div class="a" style="left:27px;top:444px;width:979px;height:1px;background:#d4d4d4;"></div>
<div class="a" style="left:1px;top:444px;width:25px;height:1px;background:#b8b8b8;"></div>
<div class="a" style="left:27px;top:464px;width:979px;height:1px;background:#d4d4d4;"></div>
<div class="a" style="left:1px;top:464px;width:25px;height:1px;background:#b8b8b8;"></div>
<div class="a" style="left:27px;top:484px;width:979px;height:1px;background:#d4d4d4;"></div>
<div class="a" style="left:1px;top:484px;width:25px;height:1px;background:#b8b8b8;"></div>
<div class="a" style="left:27px;top:504px;width:979px;height:1px;background:#d4d4d4;"></div>
<div class="a" style="left:1px;top:504px;width:25px;height:1px;background:#b8b8b8;"></div>
<div class="a" style="left:27px;top:524px;width:979px;height:1px;background:#d4d4d4;"></div>
<div class="a" style="left:1px;top:524px;width:25px;height:1px;background:#b8b8b8;"></div>
<div class="a" style="left:27px;top:544px;width:979px;height:1px;background:#d4d4d4;"></div>
<div class="a" style="left:1px;top:544px;width:25px;height:1px;background:#b8b8b8;"></div>
<div class="a" style="left:27px;top:564px;width:979px;height:1px;background:#d4d4d4;"></div>
<div class="a" style="left:1px;top:564px;width:25px;height:1px;background:#b8b8b8;"></div>
<div class="a" style="left:27px;top:584px;width:979px;height:1px;background:#d4d4d4;"></div>
<div class="a" style="left:1px;top:584px;width:25px;height:1px;background:#b8b8b8;"></div>
<div class="a" style="left:27px;top:604px;width:979px;height:1px;background:#d4d4d4;"></div>
<div class="a" style="left:1px;top:604px;width:25px;height:1px;background:#b8b8b8;"></div>
<div class="a" style="left:27px;top:624px;width:979px;height:1px;background:#d4d4d4;"></div>
<div class="a" style="left:1px;top:624px;width:25px;height:1px;background:#b8b8b8;"></div>
<div class="a" style="left:27px;top:644px;width:979px;height:1px;background:#d4d4d4;"></div>
<div class="a" style="left:1px;top:644px;width:25px;height:1px;background:#b8b8b8;"></div>
<div class="a" style="left:27px;top:664px;width:979px;height:1px;background:#d4d4d4;"></div>
<div class="a" style="left:1px;top:664px;width:25px;height:1px;background:#b8b8b8;"></div>
<div class="a" style="left:1005px;top:223px;width:1px;height:443px;background:#9f9f9f;"></div>
<svg style="left:11.5px;top:208.5px" width="12" height="12"><path d="M11.8 0.2 L11.8 11.8 L0.2 11.8 Z" fill="#b2b6b4"/></svg>
<div class="t" style="left:69.6px;top:208px;font-size:13.5px;color:#262626;-webkit-text-stroke:0;width:40px;text-align:center;">A</div>
<div class="t" style="left:185.6px;top:208px;font-size:13.5px;color:#0f7a42;-webkit-text-stroke:0;width:40px;text-align:center;">B</div>
<div class="t" style="left:269.6px;top:208px;font-size:13.5px;color:#262626;-webkit-text-stroke:0;width:40px;text-align:center;">C</div>
<div class="t" style="left:333.6px;top:208px;font-size:13.5px;color:#262626;-webkit-text-stroke:0;width:40px;text-align:center;">D</div>
<div class="t" style="left:397.6px;top:208px;font-size:13.5px;color:#262626;-webkit-text-stroke:0;width:40px;text-align:center;">E</div>
<div class="t" style="left:461.6px;top:208px;font-size:13.5px;color:#262626;-webkit-text-stroke:0;width:40px;text-align:center;">F</div>
<div class="t" style="left:525.6px;top:208px;font-size:13.5px;color:#262626;-webkit-text-stroke:0;width:40px;text-align:center;">G</div>
<div class="t" style="left:589.6px;top:208px;font-size:13.5px;color:#262626;-webkit-text-stroke:0;width:40px;text-align:center;">H</div>
<div class="t" style="left:653.6px;top:208px;font-size:13.5px;color:#262626;-webkit-text-stroke:0;width:40px;text-align:center;">I</div>
<div class="t" style="left:717.6px;top:208px;font-size:13.5px;color:#262626;-webkit-text-stroke:0;width:40px;text-align:center;">J</div>
<div class="t" style="left:781.6px;top:208px;font-size:13.5px;color:#262626;-webkit-text-stroke:0;width:40px;text-align:center;">K</div>
<div class="t" style="left:845.6px;top:208px;font-size:13.5px;color:#262626;-webkit-text-stroke:0;width:40px;text-align:center;">L</div>
<div class="t" style="left:909.6px;top:208px;font-size:13.5px;color:#262626;-webkit-text-stroke:0;width:40px;text-align:center;">M</div>
<div class="t" style="left:973.6px;top:208px;font-size:13.5px;color:#262626;-webkit-text-stroke:0;width:40px;text-align:center;">N</div>
<div class="t" style="left:1px;top:228.4px;font-size:13.5px;color:#262626;-webkit-text-stroke:0;width:25.3px;text-align:center;letter-spacing:-0.3px;">1</div>
<div class="t" style="left:1px;top:248.9px;font-size:13.5px;color:#0f7a42;-webkit-text-stroke:0;width:25.3px;text-align:center;letter-spacing:-0.3px;">2</div>
<div class="t" style="left:1px;top:268.9px;font-size:13.5px;color:#0f7a42;-webkit-text-stroke:0;width:25.3px;text-align:center;letter-spacing:-0.3px;">3</div>
<div class="t" style="left:1px;top:288.9px;font-size:13.5px;color:#0f7a42;-webkit-text-stroke:0;width:25.3px;text-align:center;letter-spacing:-0.3px;">4</div>
<div class="t" style="left:1px;top:308.9px;font-size:13.5px;color:#0f7a42;-webkit-text-stroke:0;width:25.3px;text-align:center;letter-spacing:-0.3px;">5</div>
<div class="t" style="left:1px;top:328.9px;font-size:13.5px;color:#0f7a42;-webkit-text-stroke:0;width:25.3px;text-align:center;letter-spacing:-0.3px;">6</div>
<div class="t" style="left:1px;top:348.9px;font-size:13.5px;color:#0f7a42;-webkit-text-stroke:0;width:25.3px;text-align:center;letter-spacing:-0.3px;">7</div>
<div class="t" style="left:1px;top:368.9px;font-size:13.5px;color:#0f7a42;-webkit-text-stroke:0;width:25.3px;text-align:center;letter-spacing:-0.3px;">8</div>
<div class="t" style="left:1px;top:388.9px;font-size:13.5px;color:#0f7a42;-webkit-text-stroke:0;width:25.3px;text-align:center;letter-spacing:-0.3px;">9</div>
<div class="t" style="left:1px;top:408.9px;font-size:13.5px;color:#262626;-webkit-text-stroke:0;width:25.3px;text-align:center;letter-spacing:-0.3px;">10</div>
<div class="t" style="left:1px;top:428.9px;font-size:13.5px;color:#262626;-webkit-text-stroke:0;width:25.3px;text-align:center;letter-spacing:-0.3px;">11</div>
<div class="t" style="left:1px;top:448.9px;font-size:13.5px;color:#262626;-webkit-text-stroke:0;width:25.3px;text-align:center;letter-spacing:-0.3px;">12</div>
<div class="t" style="left:1px;top:468.9px;font-size:13.5px;color:#262626;-webkit-text-stroke:0;width:25.3px;text-align:center;letter-spacing:-0.3px;">13</div>
<div class="t" style="left:1px;top:488.9px;font-size:13.5px;color:#262626;-webkit-text-stroke:0;width:25.3px;text-align:center;letter-spacing:-0.3px;">14</div>
<div class="t" style="left:1px;top:508.9px;font-size:13.5px;color:#262626;-webkit-text-stroke:0;width:25.3px;text-align:center;letter-spacing:-0.3px;">15</div>
<div class="t" style="left:1px;top:528.9px;font-size:13.5px;color:#262626;-webkit-text-stroke:0;width:25.3px;text-align:center;letter-spacing:-0.3px;">16</div>
<div class="t" style="left:1px;top:548.9px;font-size:13.5px;color:#262626;-webkit-text-stroke:0;width:25.3px;text-align:center;letter-spacing:-0.3px;">17</div>
<div class="t" style="left:1px;top:568.9px;font-size:13.5px;color:#262626;-webkit-text-stroke:0;width:25.3px;text-align:center;letter-spacing:-0.3px;">18</div>
<div class="t" style="left:1px;top:588.9px;font-size:13.5px;color:#262626;-webkit-text-stroke:0;width:25.3px;text-align:center;letter-spacing:-0.3px;">19</div>
<div class="t" style="left:1px;top:608.9px;font-size:13.5px;color:#262626;-webkit-text-stroke:0;width:25.3px;text-align:center;letter-spacing:-0.3px;">20</div>
<div class="t" style="left:1px;top:628.9px;font-size:13.5px;color:#262626;-webkit-text-stroke:0;width:25.3px;text-align:center;letter-spacing:-0.3px;">21</div>
<div class="t" style="left:1px;top:648.9px;font-size:13.5px;color:#262626;-webkit-text-stroke:0;width:25.3px;text-align:center;letter-spacing:-0.3px;">22</div>
<div class="a" style="left:27px;top:224px;width:125px;height:20px;background:#6acf3f;"></div>
<div class="a" style="left:153px;top:224px;width:104px;height:20px;background:#6acf3f;"></div>
<div class="a" style="left:153px;top:265px;width:104px;height:139px;background:#c8c8c8;"></div>
<div class="a" style="left:26px;top:244px;width:232px;height:1px;background:#000;"></div>
<div class="a" style="left:26px;top:264px;width:232px;height:1px;background:#000;"></div>
<div class="a" style="left:26px;top:284px;width:232px;height:1px;background:#000;"></div>
<div class="a" style="left:26px;top:304px;width:232px;height:1px;background:#000;"></div>
<div class="a" style="left:26px;top:324px;width:232px;height:1px;background:#000;"></div>
<div class="a" style="left:26px;top:344px;width:232px;height:1px;background:#000;"></div>
<div class="a" style="left:26px;top:364px;width:232px;height:1px;background:#000;"></div>
<div class="a" style="left:26px;top:384px;width:232px;height:1px;background:#000;"></div>
<div class="a" style="left:26px;top:404px;width:232px;height:1px;background:#000;"></div>
<div class="a" style="left:152px;top:224px;width:1px;height:20px;background:#000;"></div>
<div class="a" style="left:257px;top:224px;width:1px;height:181px;background:#000;"></div>
<div class="t" style="left:27px;top:229px;font-size:13.5px;color:#000;-webkit-text-stroke:0;width:126px;text-align:center;font-weight:bold;letter-spacing:0.78px;">Уменьшаемое</div>
<div class="t" style="left:153px;top:229px;font-size:13.5px;color:#000;-webkit-text-stroke:0;width:104px;text-align:center;font-weight:bold;letter-spacing:0.15px;">Разность</div>
<div class="t" style="left:27px;top:249px;font-size:13.5px;color:#000;-webkit-text-stroke:0;width:123.3px;text-align:right;letter-spacing:-0.35px;">447</div>
<div class="t" style="left:153px;top:249px;font-size:13.5px;color:#000;-webkit-text-stroke:0;width:102.3px;text-align:right;letter-spacing:-0.35px;">382</div>
<div class="t" style="left:27px;top:269px;font-size:13.5px;color:#000;-webkit-text-stroke:0;width:123.3px;text-align:right;letter-spacing:-0.35px;">267</div>
<div class="t" style="left:153px;top:269px;font-size:13.5px;color:#000;-webkit-text-stroke:0;width:102.3px;text-align:right;letter-spacing:-0.35px;">202</div>
<div class="t" style="left:27px;top:289px;font-size:13.5px;color:#000;-webkit-text-stroke:0;width:123.3px;text-align:right;letter-spacing:-0.35px;">579</div>
<div class="t" style="left:153px;top:289px;font-size:13.5px;color:#000;-webkit-text-stroke:0;width:102.3px;text-align:right;letter-spacing:-0.35px;">514</div>
<div class="t" style="left:27px;top:309px;font-size:13.5px;color:#000;-webkit-text-stroke:0;width:123.3px;text-align:right;letter-spacing:-0.35px;">741</div>
<div class="t" style="left:153px;top:309px;font-size:13.5px;color:#000;-webkit-text-stroke:0;width:102.3px;text-align:right;letter-spacing:-0.35px;">676</div>
<div class="t" style="left:27px;top:329px;font-size:13.5px;color:#000;-webkit-text-stroke:0;width:123.3px;text-align:right;letter-spacing:-0.35px;">584</div>
<div class="t" style="left:153px;top:329px;font-size:13.5px;color:#000;-webkit-text-stroke:0;width:102.3px;text-align:right;letter-spacing:-0.35px;">519</div>
<div class="t" style="left:27px;top:349px;font-size:13.5px;color:#000;-webkit-text-stroke:0;width:123.3px;text-align:right;letter-spacing:-0.35px;">634</div>
<div class="t" style="left:153px;top:349px;font-size:13.5px;color:#000;-webkit-text-stroke:0;width:102.3px;text-align:right;letter-spacing:-0.35px;">569</div>
<div class="t" style="left:27px;top:369px;font-size:13.5px;color:#000;-webkit-text-stroke:0;width:123.3px;text-align:right;letter-spacing:-0.35px;">91</div>
<div class="t" style="left:153px;top:369px;font-size:13.5px;color:#000;-webkit-text-stroke:0;width:102.3px;text-align:right;letter-spacing:-0.35px;">26</div>
<div class="t" style="left:27px;top:389px;font-size:13.5px;color:#000;-webkit-text-stroke:0;width:123.3px;text-align:right;letter-spacing:-0.35px;">745</div>
<div class="t" style="left:153px;top:389px;font-size:13.5px;color:#000;-webkit-text-stroke:0;width:102.3px;text-align:right;letter-spacing:-0.35px;">680</div>
<div class="a" style="left:25px;top:244px;width:2px;height:161px;background:#0f7a42;"></div>
<div class="a" style="left:153px;top:222px;width:104px;height:2px;background:#0f7a42;"></div>
<div class="a" style="left:151px;top:243px;width:2px;height:163px;background:#0f7a42;"></div>
<div class="a" style="left:257px;top:243px;width:2px;height:158px;background:#0f7a42;"></div>
<div class="a" style="left:151px;top:243px;width:108px;height:2px;background:#0f7a42;"></div>
<div class="a" style="left:151px;top:404px;width:103px;height:2px;background:#0f7a42;"></div>
<div class="a" style="left:254px;top:401px;width:6px;height:6px;background:#fff;"></div>
<div class="a" style="left:255px;top:402px;width:5px;height:5px;background:#0f7a42;"></div>
<svg style="left:0;top:0" width="1028" height="717"><path d="M262 354.6C268 356 272 359 274.4 363.5L274.4 247L279.8 247L279.8 363.5C282 359 286 356 292 354.6C285.4 367 280 386 277.4 404L276.6 404C274 386 268.600 367 262 354.6Z" fill="#fe0000"/></svg>
<div class="a" style="left:259px;top:406px;width:20px;height:20px;background:#fff;border:1px solid #ababab;border-radius:1px;"></div>
<svg style="left:259px;top:406px" width="20" height="20"><rect x="3.5" y="3.5" width="6" height="4" fill="#1e8bcd" stroke="#8a8a8a"/><rect x="9.5" y="3.5" width="6" height="4" fill="#fff" stroke="#8a8a8a"/><rect x="3.5" y="7.5" width="6" height="4" fill="#fff" stroke="#8a8a8a"/><path d="M3 13.5h1M5 13.5h1M7 13.5h1M9 13.5h1M3 15.5h1M5 15.5h1M7 15.5h1M9 15.5h1" stroke="#9a9a9a" stroke-width="1"/><path d="M14.5 11v5M12 13.5h5" stroke="#777" stroke-width="1"/></svg>
<div class="a" style="left:1px;top:666px;width:1005px;height:1px;background:#9f9f9f;"></div>
<div class="a" style="left:102px;top:666px;width:105px;height:23px;background:#fff;"></div>
<div class="a" style="left:101px;top:666px;width:1px;height:24px;background:#cfcfcf;"></div>
<div class="a" style="left:207px;top:666px;width:1px;height:24px;background:#cfcfcf;"></div>
<div class="a" style="left:101px;top:689px;width:107px;height:2px;background:#0f7a42;"></div>
<div class="t" style="left:112.8px;top:673.005px;font-size:13.5px;color:#0f7a42;letter-spacing:-0.35px;font-weight:bold;">microexcel.ru</div>
<svg style="left:27px;top:676px" width="5" height="8" viewBox="0 0 5 8" ><path d="M4.8 0v7.4L0.2 3.7z" fill="#b9b9b9"/></svg>
<svg style="left:57px;top:676px" width="5" height="8" viewBox="0 0 5 8" ><path d="M0.2 0v7.4l4.6-3.7z" fill="#b9b9b9"/></svg>
<svg style="left:241px;top:672px" width="16" height="16" viewBox="0 0 16 16" ><circle cx="8" cy="8" r="7.1" fill="none" stroke="#5a5a5a" stroke-width="1.1"/><path d="M8 4.2v7.6M4.2 8h7.6" stroke="#5a5a5a" stroke-width="1.4"/></svg>
<div class="a" style="left:616px;top:675px;width:2px;height:2px;background:#a9adab;"></div>
<div class="a" style="left:616px;top:679px;width:2px;height:2px;background:#a9adab;"></div>
<div class="a" style="left:616px;top:683px;width:2px;height:2px;background:#a9adab;"></div>
<div class="a" style="left:633px;top:673px;width:373px;height:15px;background:#fff;border:1px solid #ababab;"></div>
<div class="a" style="left:647px;top:674px;width:2px;height:13px;background:#ababab;"></div>
<div class="a" style="left:964px;top:674px;width:28px;height:13px;background:#dcdcdc;"></div>
<div class="a" style="left:963px;top:674px;width:1px;height:13px;background:#ababab;"></div>
<div class="a" style="left:991px;top:674px;width:1px;height:13px;background:#ababab;"></div>
<div class="a" style="left:992px;top:674px;width:13px;height:13px;background:#fff;"></div>
<svg style="left:638px;top:676.5px" width="5" height="8" viewBox="0 0 5 8" ><path d="M4.6 0.3v7.2L0.4 3.9z" fill="#5a5a5a"/></svg>
<svg style="left:996px;top:676.5px" width="5" height="8" viewBox="0 0 5 8" ><path d="M0.4 0.3v7.2l4.2-3.6z" fill="#5a5a5a"/></svg>
<div class="a" style="left:1009px;top:206px;width:15px;height:15px;background:#fff;border:1px solid #ababab;"></div>
<div class="a" style="left:1009px;top:220px;width:15px;height:412px;background:#fff;border:1px solid #ababab;"></div>
<div class="a" style="left:1009px;top:632px;width:15px;height:20px;background:#dadada;"></div>
<div class="a" style="left:1009px;top:652px;width:15px;height:15px;background:#fff;border:1px solid #ababab;"></div>
<svg style="left:1013px;top:211px" width="7" height="4" viewBox="0 0 7 4" ><path d="M0 4h7L3.5 0z" fill="#5a5a5a"/></svg>
<svg style="left:1013px;top:658px" width="7" height="4" viewBox="0 0 7 4" ><path d="M0 0h7L3.5 4z" fill="#5a5a5a"/></svg>
<div class="a" style="left:1px;top:694px;width:1026px;height:22px;background:#f3f3f3;border-top:1px solid #cfcfcf;"></div>
<div class="t" style="left:9.1px;top:697.833px;font-size:11.6px;color:#262626;letter-spacing:0.22px;">Готово</div>
<svg style="left:73px;top:698px" width="14" height="14" viewBox="0 0 14 14" ><rect x="1.6" y="2.4" width="11.4" height="10.6" fill="#6b3a2a"/><g fill="#fff"><rect x="3" y="6.200" width="2.300" height="1.500"/><rect x="6.300" y="6.200" width="2.300" height="1.500"/><rect x="9.600" y="6.200" width="2.300" height="1.500"/><rect x="3" y="8.600" width="2.300" height="1.500"/><rect x="6.300" y="8.600" width="2.300" height="1.500"/><rect x="9.600" y="8.600" width="2.300" height="1.500"/><rect x="3" y="11" width="2.300" height="1.200"/><rect x="6.300" y="11" width="2.300" height="1.200"/><rect x="9.600" y="11" width="2.300" height="1.200"/></g><circle cx="3" cy="2.800" r="2.800" fill="#6b3a2a"/><circle cx="3" cy="2.800" r="1.200" fill="#b98a7c"/></svg>
<div class="t" style="left:468.7px;top:697.933px;font-size:11.6px;color:#262626;letter-spacing:-0.26px;">Среднее: 446</div>
<div class="t" style="left:553.3px;top:697.933px;font-size:11.6px;color:#262626;letter-spacing:0.01px;">Количество: 8</div>
<div class="t" style="left:643.8px;top:697.933px;font-size:11.6px;color:#262626;letter-spacing:-0.41px;">Сумма: 3568</div>
<div class="a" style="left:727px;top:695px;width:38px;height:20px;background:#c6c6c6;"></div>
<svg style="left:739.5px;top:698.5px" width="12" height="12" viewBox="0 0 12 12" ><rect x="0.5" y="0.5" width="11" height="11" fill="none" stroke="#6a6a6a"/><path d="M0.5 4.2h11M0.5 7.8h11M4.2 0.5v11M7.8 0.5v11" stroke="#6a6a6a" stroke-width="0.9"/></svg>
<svg style="left:777px;top:698.5px" width="14" height="12" viewBox="0 0 14 12" ><rect x="0.5" y="0.5" width="13" height="11" fill="none" stroke="#6a6a6a"/><rect x="3.5" y="2.5" width="7" height="7" fill="none" stroke="#6a6a6a"/><path d="M5 4.6h4M5 6h4M5 7.4h4" stroke="#6a6a6a" stroke-width="0.7"/></svg>
<svg style="left:814.5px;top:697.5px" width="14" height="12" viewBox="0 0 14 12" ><path d="M0.5 0.5h13v11h-13z" fill="none" stroke="#6a6a6a"/><path d="M5 0.5v7h4.4v-7M0.5 7.5h4.5" fill="none" stroke="#6a6a6a"/></svg>
<div class="a" style="left:846px;top:704px;width:6px;height:1.6px;background:#6a6a6a;"></div>
<div class="a" style="left:856px;top:704.4px;width:100px;height:1px;background:#8a8a8a;"></div>
<div class="a" style="left:904.4px;top:699px;width:4.2px;height:11px;background:#6a6a6a;"></div>
<div class="a" style="left:959px;top:704px;width:7.4px;height:1.6px;background:#6a6a6a;"></div>
<div class="a" style="left:961.9px;top:701.1px;width:1.6px;height:7.4px;background:#6a6a6a;"></div>
<div class="t" style="left:977.8px;top:697.933px;font-size:11.6px;color:#262626;letter-spacing:-0.69px;">100 %</div>
<div class="a" id="bl"></div><div class="a" id="br"></div><div class="a" id="bb"></div>
</body></html>
